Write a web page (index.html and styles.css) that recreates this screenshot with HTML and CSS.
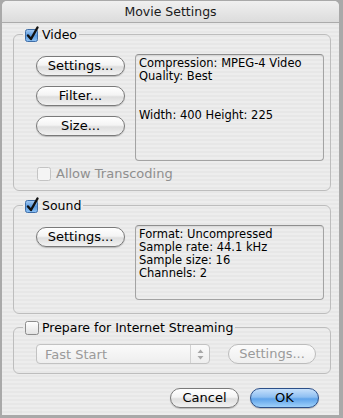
FILE: index.html
```html
<!DOCTYPE html>
<html>
<head>
<meta charset="utf-8">
<link rel="stylesheet" href="styles.css">
</head>
<body>
<div class="window">
  <div class="titlebar">Movie Settings</div>
  <div class="content">
    <fieldset class="group group-video">
      <legend class="legend">
        <span class="check checked"><svg width="14" height="14" viewBox="0 0 14 14"><defs><linearGradient id="bl1" x1="0" y1="0" x2="0" y2="1"><stop offset="0" stop-color="#a9cdf3"/><stop offset="0.5" stop-color="#5a9ae0"/><stop offset="1" stop-color="#8fc3f5"/></linearGradient></defs><rect x="0.5" y="1.5" width="12" height="12" rx="2" fill="url(#bl1)" stroke="#3f6ea8"/><path d="M3 7.5 L6 11 L12.5 -0.5" fill="none" stroke="#111" stroke-width="2.4" stroke-linecap="round" stroke-linejoin="round"/></svg></span>
        <span class="legend-text">Video</span>
      </legend>
      <div class="group-body">
        <div class="row">
          <div class="btn-col">
            <div class="btn">Settings...</div>
            <div class="btn">Filter...</div>
            <div class="btn">Size...</div>
          </div>
          <div class="info info-video">
            <div>Compression: MPEG-4 Video</div>
            <div>Quality: Best</div>
            <div>&nbsp;</div>
            <div>&nbsp;</div>
            <div>Width: 400 Height: 225</div>
          </div>
        </div>
        <div class="transcode">
          <span class="check disabled"><svg width="14" height="14" viewBox="0 0 14 14"><rect x="0.5" y="0.5" width="13" height="13" rx="2" fill="#f4f4f4" stroke="#c4c4c4"/></svg></span>
          <span class="transcode-text">Allow Transcoding</span>
        </div>
      </div>
    </fieldset>

    <fieldset class="group group-sound">
      <legend class="legend">
        <span class="check checked"><svg width="14" height="14" viewBox="0 0 14 14"><defs><linearGradient id="bl2" x1="0" y1="0" x2="0" y2="1"><stop offset="0" stop-color="#a9cdf3"/><stop offset="0.5" stop-color="#5a9ae0"/><stop offset="1" stop-color="#8fc3f5"/></linearGradient></defs><rect x="0.5" y="1.5" width="12" height="12" rx="2" fill="url(#bl2)" stroke="#3f6ea8"/><path d="M3 7.5 L6 11 L12.5 -0.5" fill="none" stroke="#111" stroke-width="2.4" stroke-linecap="round" stroke-linejoin="round"/></svg></span>
        <span class="legend-text">Sound</span>
      </legend>
      <div class="group-body sound-body">
        <div class="row">
          <div class="btn-col">
            <div class="btn">Settings...</div>
          </div>
          <div class="info info-sound">
            <div>Format: Uncompressed</div>
            <div>Sample rate: 44.1 kHz</div>
            <div>Sample size: 16</div>
            <div>Channels: 2</div>
          </div>
        </div>
      </div>
    </fieldset>

    <fieldset class="group group-stream">
      <legend class="legend">
        <span class="check"><svg width="14" height="14" viewBox="0 0 14 14"><defs><linearGradient id="wh" x1="0" y1="0" x2="0" y2="1"><stop offset="0" stop-color="#ffffff"/><stop offset="1" stop-color="#e2e2e2"/></linearGradient></defs><rect x="0.5" y="0.5" width="13" height="13" rx="2" fill="url(#wh)" stroke="#8c8c8c"/></svg></span>
        <span class="legend-text">Prepare for Internet Streaming</span>
      </legend>
      <div class="group-body stream-body">
        <div class="popup">
          <span class="popup-text">Fast Start</span>
          <span class="popup-arrows"><svg width="7" height="11" viewBox="0 0 7 11"><path d="M3.5 0.5 L6.5 4 L0.5 4 Z M0.5 7 L6.5 7 L3.5 10.5 Z" fill="#a8a8a8"/></svg></span>
        </div>
        <div class="btn btn-disabled">Settings...</div>
      </div>
    </fieldset>

    <div class="footer">
      <div class="btn btn-foot">Cancel</div>
      <div class="btn btn-foot btn-default">OK</div>
    </div>
  </div>
</div>
</body>
</html>
```

FILE: styles.css
```css
html, body {
  margin: 0;
  padding: 0;
}
body {
  width: 343px;
  height: 418px;
  background: #a9a9a9;
  padding: 1px 4px 3px 2px;
  box-sizing: border-box;
  font-family: "DejaVu Sans", "Liberation Sans", sans-serif;
  color: #000;
  overflow: hidden;
}
.window {
  width: 337px;
  height: 414px;
  border-radius: 5px 5px 0 0;
  overflow: hidden;
  background: repeating-linear-gradient(to bottom, #ededed 0px, #ededed 2px, #e7e7e7 2px, #e7e7e7 4px);
  display: flex;
  flex-direction: column;
}
.titlebar {
  height: 21px;
  border-bottom: 1px solid #ababab;
  background: linear-gradient(to bottom, #f0f0f0, #dcdcdc);
  text-align: center;
  font-size: 12.5px;
  line-height: 22px;
  color: #1a1a1a;
}
.content {
  display: flex;
  flex-direction: column;
  padding: 4px 8px 0 11px;
}
.group {
  margin: 0;
  padding: 0;
  border: 1px solid #bdbdbd;
  border-radius: 6px;
  min-width: 0;
}
.group-sound { margin-top: 7px; }
.group-stream { margin-top: 6px; }
.legend {
  margin-left: 9px;
  padding: 0 2px;
  display: flex;
  align-items: center;
  height: 15px;
}
.check {
  display: block;
  width: 14px;
  height: 14px;
}
.check svg { display: block; overflow: visible; }
.legend-text {
  font-size: 12.5px;
  margin-left: 3px;
  line-height: 15px;
}
.group-body {
  padding: 12px 6px 9px 22px;
}
.row {
  display: flex;
  align-items: flex-start;
}
.btn-col {
  display: flex;
  flex-direction: column;
  gap: 10px;
  padding-top: 2px;
  width: 89px;
}
.btn {
  height: 18px;
  border: 1px solid #7a7a7a;
  border-radius: 10px;
  background: linear-gradient(to bottom, #ffffff 0%, #f4f4f4 45%, #dedede 55%, #f2f2f2 100%);
  box-shadow: 0 1px 1px rgba(0,0,0,0.2);
  font-size: 13px;
  line-height: 18px;
  text-align: center;
}
.info {
  margin-left: 10px;
  width: 182px;
  border: 1px solid #a3a3a3;
  border-top-color: #8e8e8e;
  border-radius: 4px;
  padding: 2px 2px 2px 3px;
  font-size: 11.5px;
  line-height: 13px;
  box-shadow: inset 0 1px 1px rgba(0,0,0,0.08);
  overflow: hidden;
}
.info-video { height: 101px; }
.info-sound { height: 69px; }
.transcode {
  display: flex;
  align-items: center;
  margin-top: 5px;
  margin-left: 1px;
}
.transcode-text {
  margin-left: 5px;
  font-size: 13px;
  color: #8f8f8f;
}
.sound-body { padding-bottom: 13px; }
.stream-body {
  display: flex;
  align-items: center;
  padding-top: 9px;
  padding-bottom: 9px;
}
.popup {
  width: 172px;
  height: 18px;
  border: 1px solid #c2c2c2;
  border-radius: 4px;
  background: linear-gradient(to bottom, #fafafa, #eeeeee);
  display: flex;
  align-items: center;
}
.popup-text {
  flex: 1;
  padding-left: 8px;
  font-size: 13px;
  color: #9a9a9a;
}
.popup-arrows {
  width: 18px;
  height: 18px;
  border-left: 1px solid #d2d2d2;
  display: flex;
  align-items: center;
  justify-content: center;
}
.btn-disabled {
  margin-left: 18px;
  width: 86px;
  border-color: #bcbcbc;
  color: #9a9a9a;
  box-shadow: none;
  background: linear-gradient(to bottom, #fbfbfb, #efefef);
}
.footer {
  display: flex;
  justify-content: flex-end;
  gap: 11px;
  margin-top: 14px;
  padding-right: 12px;
}
.btn-foot {
  width: 67px;
}
.btn-default {
  border-color: #2c4f88;
  background: linear-gradient(to bottom, #c6e0fb 0%, #8ebff2 45%, #5fa3ea 55%, #9fd1fa 100%);
}
```
